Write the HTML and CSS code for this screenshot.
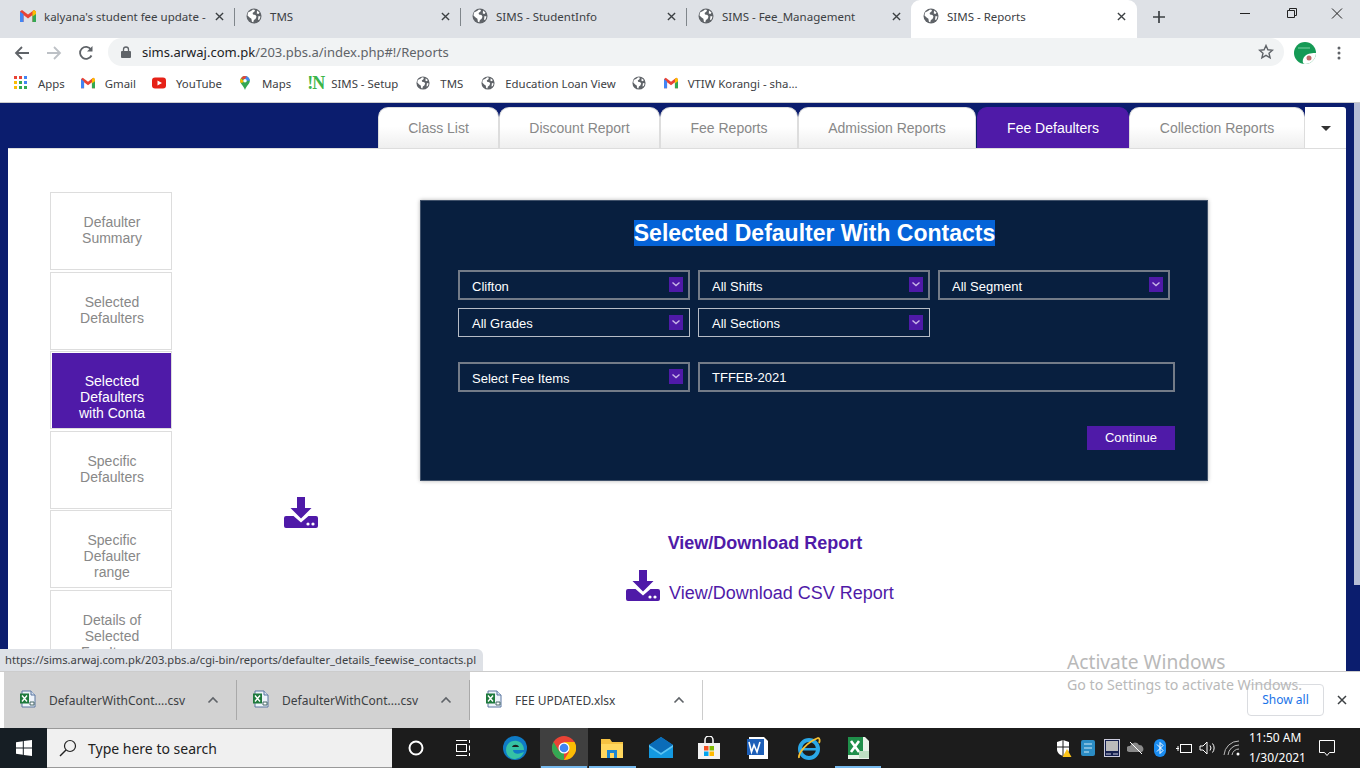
FILE: index.html
```html
<!DOCTYPE html>
<html lang="en">
<head>
<meta charset="utf-8">
<title>SIMS - Reports</title>
<link rel="stylesheet" href="styles.css">
</head>
<body>
<svg class="defs" width="0" height="0" aria-hidden="true">
  <symbol id="globe" viewBox="0 0 16 16"><circle cx="8" cy="8" r="7.5" fill="#5f6368"/><path d="M2 4.500 5 3l2-1.600 2 .6-.5 1.600L6.600 5 7 6.500l2.500.6 1 1.600-1 2.200-1.600 1.200-.6 2.200-1.400-.5-.5-3L3.600 9.600 1.500 7.500z" fill="#fff"/><path d="M11 2.500l2.500 2-1 1.500-1.700-.5zM12.500 8l2 .5-1 3-1.500.5z" fill="#fff"/></symbol>
  <symbol id="gmail" viewBox="0 0 16 12"><path d="M0 1.500V12h3.500V5L8 8.500 12.500 5v7H16V1.500L14 0 8 4.500 2 0z" fill="#ea4335"/><path d="M0 1.500V12h3.500V4.200z" fill="#4285f4"/><path d="M16 1.500V12h-3.500V4.200z" fill="#34a853"/><path d="M14 0l2 1.500v2.500l-3.500 2.500V1.100z" fill="#fbbc04"/></symbol>
  <symbol id="xlfile" viewBox="0 0 17 18"><path d="M3 1h9l4 4v12H3z" fill="#eef3fa" stroke="#5b76a0"/><path d="M12 1v4h4" fill="#d5e0ef" stroke="#5b76a0"/><rect x="1" y="3.500" width="9" height="10" fill="#1f7a3d"/><path d="M3 5.500l5 6M8 5.500l-5 6" stroke="#fff" stroke-width="1.400"/><path d="M11 12h4v3h-4z" fill="#fff" stroke="#466"/></symbol>
  <symbol id="dl" viewBox="0 0 34 31"><path d="M13 0h8v11h6.500L17 21.500 6.500 11H13z" fill="#4f1aa8"/><path d="M2 19h7.500l7.500 6.500 7.500-6.500H32a2 2 0 0 1 2 2v8a2 2 0 0 1-2 2H2a2 2 0 0 1-2-2v-8a2 2 0 0 1 2-2z" fill="#4f1aa8"/><circle cx="24" cy="27" r="1.600" fill="#fff"/><circle cx="29" cy="27" r="1.600" fill="#fff"/></symbol>
  <symbol id="chev" viewBox="0 0 14 15"><rect width="14" height="15" fill="#4f1aa8"/><path d="M3.500 5.500 7 8.500l3.500-3" fill="none" stroke="#c9b6e8" stroke-width="1.400"/></symbol>
  <symbol id="x" viewBox="0 0 10 10"><path d="M1 1l8 8M9 1l-8 8" stroke="#3c4043" stroke-width="1.500" fill="none"/></symbol>
  <symbol id="up" viewBox="0 0 12 8"><path d="M1.500 6.500 6 2l4.500 4.500" stroke="#5f6368" stroke-width="1.600" fill="none"/></symbol>
</svg>

<div class="tabstrip">
  <div class="ctab sep"><svg class="fav16 g"><use href="#gmail"/></svg><span class="ctab-t">kalyana's student fee update -</span><svg class="tx"><use href="#x"/></svg></div>
  <div class="ctab sep"><svg class="fav16"><use href="#globe"/></svg><span class="ctab-t">TMS</span><svg class="tx"><use href="#x"/></svg></div>
  <div class="ctab sep"><svg class="fav16"><use href="#globe"/></svg><span class="ctab-t">SIMS - StudentInfo</span><svg class="tx"><use href="#x"/></svg></div>
  <div class="ctab narrow"><svg class="fav16"><use href="#globe"/></svg><span class="ctab-t">SIMS - Fee_Management</span><svg class="tx"><use href="#x"/></svg></div>
  <div class="ctab active"><svg class="fav16"><use href="#globe"/></svg><span class="ctab-t">SIMS - Reports</span><svg class="tx"><use href="#x"/></svg></div>
  <svg class="newtab" viewBox="0 0 12 12"><path d="M6 0v12M0 6h12" stroke="#3c4043" stroke-width="1.700"/></svg>
  <div class="winbtns">
    <svg class="wb" viewBox="0 0 46 20"><path d="M18 10.500h10" stroke="#222"/></svg>
    <svg class="wb" viewBox="0 0 46 20"><path d="M19.500 7.500h7v7h-7zM21.500 7.500v-2h7v7h-2" fill="none" stroke="#222"/></svg>
    <svg class="wb" viewBox="0 0 46 20"><path d="M18 5.500l10 10M28 5.500l-10 10" stroke="#222"/></svg>
  </div>
</div>

<div class="toolbar">
  <svg class="nav" viewBox="0 0 16 16"><path d="M15 8H2M8 2 2 8l6 6" fill="none" stroke="#5f6368" stroke-width="1.800"/></svg>
  <svg class="nav" viewBox="0 0 16 16"><path d="M1 8h13M8 2l6 6-6 6" fill="none" stroke="#bdc1c6" stroke-width="1.800"/></svg>
  <svg class="nav" viewBox="0 0 16 16"><path d="M13.500 10.500A6 6 0 1 1 13 4.500" fill="none" stroke="#5f6368" stroke-width="1.800"/><path d="M14.500 1v5.500H9z" fill="#5f6368"/></svg>
  <div class="omni">
    <svg class="lock" viewBox="0 0 10 12"><path d="M2.500 5V3.500a2.500 2.500 0 0 1 5 0V5" fill="none" stroke="#5f6368" stroke-width="1.300"/><rect y="5" width="10" height="7" rx="1" fill="#5f6368"/></svg>
    <span class="url"><b>sims.arwaj.com.pk</b>/203.pbs.a/index.php#!/Reports</span>
    <svg class="star" viewBox="0 0 16 16"><path d="M8 1.500l1.900 4.300 4.600.4-3.500 3 1.100 4.600L8 11.400l-4.100 2.400L5 9.200l-3.500-3 4.600-.4z" fill="none" stroke="#5f6368" stroke-width="1.400"/></svg>
  </div>
  <svg class="avatar" viewBox="0 0 22 22"><circle cx="11" cy="11" r="11" fill="#159a55"/><path d="M22 11a11 11 0 0 1-11 11c-3 0-3-5 0-8s8-3 11-3z" fill="#fff"/><circle cx="15" cy="16" r="2.500" fill="#c06a6a"/><path d="M4 6h12" stroke="#7fd0a6"/></svg>
  <svg class="kebab" viewBox="0 0 4 14"><circle cx="2" cy="2" r="1.500" fill="#5f6368"/><circle cx="2" cy="7" r="1.500" fill="#5f6368"/><circle cx="2" cy="12" r="1.500" fill="#5f6368"/></svg>
</div>

<div class="bookmarks">
  <div class="bm"><svg class="fav14" viewBox="0 0 14 14"><g><rect x="0" y="0" width="3" height="3" fill="#ea4335"/><rect x="5" y="0" width="3" height="3" fill="#ea4335"/><rect x="10" y="0" width="3" height="3" fill="#4285f4"/><rect x="0" y="5" width="3" height="3" fill="#fbbc04"/><rect x="5" y="5" width="3" height="3" fill="#34a853"/><rect x="10" y="5" width="3" height="3" fill="#4285f4"/><rect x="0" y="10" width="3" height="3" fill="#fbbc04"/><rect x="5" y="10" width="3" height="3" fill="#34a853"/><rect x="10" y="10" width="3" height="3" fill="#34a853"/></g></svg>Apps</div>
  <div class="bm"><svg class="fav14"><use href="#gmail"/></svg>Gmail</div>
  <div class="bm"><svg class="fav14" viewBox="0 0 14 14"><rect y="1.500" width="14" height="11" rx="3" fill="#e62117"/><path d="M5.500 4.500v5L10 7z" fill="#fff"/></svg>YouTube</div>
  <div class="bm"><svg class="fav14" viewBox="0 0 12 16"><path d="M6 0a5.500 5.500 0 0 1 5.500 5.500C11.500 9.500 7.500 11 6 16 4.500 11 .5 9.500.5 5.500A5.500 5.500 0 0 1 6 0z" fill="#34a853"/><path d="M6 0a5.500 5.500 0 0 1 5.500 5.500L8 5.500A2 2 0 0 0 6 3.500z" fill="#4285f4"/><path d="M1.500 2.500 4 5.500A2 2 0 0 0 4.500 7L1 8C.2 6 .3 4 1.500 2.500z" fill="#fbbc04"/><path d="M1.500 2.500A5.500 5.500 0 0 1 6 0l2 1L4.500 4z" fill="#ea4335"/><circle cx="6" cy="5.500" r="2" fill="#fff"/></svg>Maps</div>
  <div class="bm bm-w"><span class="innov"><i>!</i>N</span>SIMS - Setup</div>
  <div class="bm bm-w"><svg class="fav14"><use href="#globe"/></svg>TMS</div>
  <div class="bm"><svg class="fav14"><use href="#globe"/></svg>Education Loan View</div>
  <div class="bm bm-empty"><svg class="fav14"><use href="#globe"/></svg></div>
  <div class="bm"><svg class="fav14"><use href="#gmail"/></svg>VTIW Korangi - sha...</div>
</div>

<div class="page">
  <div class="page-inner">
    <nav class="report-tabs">
      <div class="rtab w-class">Class List</div>
      <div class="rtab w-disc">Discount Report</div>
      <div class="rtab w-fee">Fee Reports</div>
      <div class="rtab w-adm">Admission Reports</div>
      <div class="rtab w-def on">Fee Defaulters</div>
      <div class="rtab w-col">Collection Reports</div>
      <div class="rtab-more"><span class="caret"></span></div>
    </nav>
    <div class="sheet">
      <aside class="side">
        <div class="side-item">Defaulter Summary</div>
        <div class="side-item">Selected Defaulters</div>
        <div class="side-item on"><div class="side-fill">Selected Defaulters with Conta</div></div>
        <div class="side-item">Specific Defaulters</div>
        <div class="side-item">Specific Defaulter range</div>
        <div class="side-item">Details of Selected Fee Items</div>
      </aside>
      <main class="main">
        <section class="panel">
          <h1 class="panel-title"><span class="sel">Selected Defaulter With Contacts</span></h1>
          <div class="fields">
            <div class="field">Clifton<svg class="chev"><use href="#chev"/></svg></div>
            <div class="field">All Shifts<svg class="chev"><use href="#chev"/></svg></div>
            <div class="field">All Segment<svg class="chev"><use href="#chev"/></svg></div>
            <div class="field light">All Grades<svg class="chev"><use href="#chev"/></svg></div>
            <div class="field light">All Sections<svg class="chev"><use href="#chev"/></svg></div>
          </div>
          <div class="fields second">
            <div class="field">Select Fee Items<svg class="chev"><use href="#chev"/></svg></div>
            <div class="field wide">TFFEB-2021</div>
          </div>
          <div class="actions"><div class="continue">Continue</div></div>
        </section>
        <div class="lower">
          <svg class="dl lone"><use href="#dl"/></svg>
          <div class="links">
            <div class="link-bold">View/Download Report</div>
            <div class="link-csv"><svg class="dl"><use href="#dl"/></svg><span>View/Download CSV Report</span></div>
          </div>
        </div>
      </main>
    </div>
  </div>
  <div class="scroll-thumb"></div>
  <div class="status">https://sims.arwaj.com.pk/203.pbs.a/cgi-bin/reports/defaulter_details_feewise_contacts.pl</div>
</div>

<div class="shelf">
  <div class="dlitem grey"><svg class="xl"><use href="#xlfile"/></svg><span class="dlname">DefaulterWithCont....csv</span><svg class="dlup"><use href="#up"/></svg></div>
  <div class="dlitem grey"><svg class="xl"><use href="#xlfile"/></svg><span class="dlname">DefaulterWithCont....csv</span><svg class="dlup"><use href="#up"/></svg></div>
  <div class="dlitem last"><svg class="xl"><use href="#xlfile"/></svg><span class="dlname">FEE UPDATED.xlsx</span><svg class="dlup"><use href="#up"/></svg></div>
  <div class="showall">Show all</div>
  <svg class="shelfx"><use href="#x"/></svg>
  <div class="activate"><div class="a1">Activate Windows</div><div class="a2">Go to Settings to activate Windows.</div></div>
</div>

<footer class="taskbar">
  <div class="start"><svg class="winlogo" viewBox="0 0 16 16"><path d="M0 2.200 6.800 1.200V7.500H0zM7.800 1 16 0v7.500H7.800zM0 8.500h6.800v6.300L0 13.800zM7.800 8.500H16V16l-8.200-1.100z" fill="#fff"/></svg></div>
  <div class="search"><svg class="mag" viewBox="0 0 18 18"><circle cx="11" cy="7" r="5.500" fill="none" stroke="#222" stroke-width="1.200"/><path d="M7 11 1 17" stroke="#222" stroke-width="1.400"/></svg>Type here to search</div>
  <div class="tb"><svg class="ti" viewBox="0 0 20 20"><circle cx="10" cy="10" r="6.500" fill="none" stroke="#fff" stroke-width="2"/></svg></div>
  <div class="tb"><svg class="ti" viewBox="0 0 20 20"><path d="M3 2.500h11M3 17.500h11" stroke="#fff"/><rect x="3.500" y="6.500" width="10" height="7" fill="none" stroke="#fff"/><path d="M16.500 2v3M16.500 7.500v5M16.500 15v3" stroke="#fff"/></svg></div>
  <div class="tb app first"><svg class="ti big" viewBox="0 0 24 24"><circle cx="12" cy="12" r="12" fill="#0f7bc6"/><path d="M3 14C3 7 9 4 14 5s7 5 7 9h-11c0 3 4 5 8 3l3-1c-2 5-6 7-10 7S3 19 3 14z" fill="#35c1a5"/><path d="M9 11c1-3 6-3 7 0z" fill="#1c1c1c"/></svg></div>
  <div class="tb app running hot"><svg class="ti big" viewBox="0 0 24 24"><circle cx="12" cy="12" r="12" fill="#ea4335"/><path d="M12 24A12 12 0 0 1 1.600 6L7 15l5 2z" fill="#34a853"/><path d="M12 6h10.500A12 12 0 0 1 12 24l5-8z" fill="#fbbc04"/><circle cx="12" cy="12" r="5.500" fill="#fff"/><circle cx="12" cy="12" r="4.300" fill="#4285f4"/></svg></div>
  <div class="tb app running"><svg class="ti big" viewBox="0 0 24 24"><path d="M1 3h9l2 3h11v16H1z" fill="#f5c242"/><rect x="1" y="8" width="22" height="14" fill="#ffd75e"/><rect x="7" y="14" width="10" height="8" fill="#1c86d1"/><rect x="10" y="17" width="4" height="5" fill="#ffd75e"/></svg></div>
  <div class="tb app"><svg class="ti big" viewBox="0 0 24 24"><path d="M0 9 12 1l12 8v13H0z" fill="#1499e0"/><path d="M0 9l12 8 12-8-12-8z" fill="#0b6cb8"/><path d="M0 9l12 8 12-8v2L12 19 0 11z" fill="#5cc4f4"/></svg></div>
  <div class="tb app"><svg class="ti big" viewBox="0 0 24 24"><path d="M8 6V3a4 4 0 0 1 8 0v3" fill="none" stroke="#fff" stroke-width="1.500" transform="translate(0 1)"/><rect x="1" y="7" width="22" height="16" fill="#f2f2f2"/><rect x="7" y="10" width="4.500" height="4.500" fill="#f25022"/><rect x="12.500" y="10" width="4.500" height="4.500" fill="#7fba00"/><rect x="7" y="15.500" width="4.500" height="4.500" fill="#00a4ef"/><rect x="12.500" y="15.500" width="4.500" height="4.500" fill="#ffb900"/></svg></div>
  <div class="tb app"><svg class="ti big" viewBox="0 0 24 24"><path d="M3 1h15l4 4v18H3z" fill="#fff"/><rect x="1" y="3" width="17" height="16" fill="#1d5fb8"/><path d="M3 6l2.500 10L8 9l3 7 3-10" fill="none" stroke="#fff" stroke-width="1.600"/></svg></div>
  <div class="tb app pushed"><svg class="ti big" viewBox="0 0 24 24"><circle cx="12" cy="13" r="9" fill="none" stroke="#2aa7e6" stroke-width="4"/><rect x="5" y="12" width="15" height="2.500" fill="#2aa7e6"/><path d="M2 22C1 17 10 6 21 2c2 0 2 3 1 5" fill="none" stroke="#f5c033" stroke-width="1.800"/></svg></div>
  <div class="tb app running"><svg class="ti big" viewBox="0 0 24 24"><path d="M2 1h17l4 4v18H2z" fill="#eaf3ea"/><rect x="2" y="1" width="15" height="18" fill="#1f8f4a"/><path d="M5 5l8 11M13 5 5 16" stroke="#fff" stroke-width="2.600"/><path d="M13 15h10v7H13z" fill="#bfe0c4"/></svg></div>
  <div class="tray">
    <svg class="tri" viewBox="0 0 16 18"><path d="M1 3l6-2 6 2v7c0 4-3 6-6 7-3-1-6-3-6-7z" fill="#fff"/><path d="M7 1v16M1 8h12" stroke="#1c1c1c"/><path d="M11 10l4.500 8h-9z" fill="#fcc419"/></svg>
    <svg class="tri" viewBox="0 0 16 18"><rect x="1" y="1" width="14" height="16" rx="2" fill="#2b8cc4"/><path d="M4 5h8M4 9h8M4 13h5" stroke="#cfeaf8"/></svg>
    <svg class="tri" viewBox="0 0 16 18"><rect x=".5" y=".5" width="15" height="17" fill="#15204e" stroke="#ccd"/><rect x="2" y="2" width="12" height="10" fill="#bbb"/><path d="M2 15h5M9 15h5" stroke="#ccd"/></svg>
    <svg class="tri" viewBox="0 0 18 18"><path d="M2 13a3 3 0 0 1 1-6 5 5 0 0 1 9-1 4 4 0 0 1 3 7z" fill="#8a8a8a"/><path d="M3 3l12 12" stroke="#fff"/></svg>
    <svg class="tri" viewBox="0 0 12 18"><rect width="12" height="18" rx="6" fill="#1a8cf0"/><path d="M3 5.500l6 6L6 14.500V3.500l3 3-6 6" fill="none" stroke="#fff"/></svg>
    <svg class="tri" viewBox="0 0 18 18"><rect x="5.500" y="5.500" width="11" height="8" fill="none" stroke="#fff"/><path d="M1 9.500h3M3 7v5" stroke="#fff"/></svg>
    <svg class="tri" viewBox="0 0 18 18"><path d="M1 7h3l4-4v12l-4-4H1z" fill="none" stroke="#fff"/><path d="M11 6.500a4 4 0 0 1 0 5M13.500 4.500a7 7 0 0 1 0 9" fill="none" stroke="#fff"/></svg>
    <svg class="tri" viewBox="0 0 18 18"><path d="M1 16A15 15 0 0 1 16 2M5 16A11 11 0 0 1 16 6M9 16a7 7 0 0 1 7-6" fill="none" stroke="#bbb"/><circle cx="15" cy="15" r="1.500" fill="#fff"/></svg>
    <div class="clock"><div>11:50 AM</div><div>1/30/2021</div></div>
    <svg class="notif" viewBox="0 0 18 18"><path d="M1.500 1.500h15v12h-5L9 16.500 6.500 13.500h-5z" fill="none" stroke="#fff"/></svg>
  </div>
</footer>
</body>
</html>
```
FILE: styles.css
```css
* { box-sizing: border-box; }
html, body { margin: 0; height: 100%; overflow: hidden; }
body { width: 1360px; height: 768px; display: flex; flex-direction: column; font-family: "Noto Sans", "Open Sans", sans-serif; background: #fff; }
.defs { position: absolute; }

/* Chrome tab strip */
.tabstrip { height: 38px; flex: none; background: #dee1e6; display: flex; align-items: stretch; padding-left: 8px; color: #3c4043; font-size: 11.500px; }
.ctab { width: 227px; margin-right: -1px; display: flex; align-items: center; padding: 0 11px 6px 12px; position: relative; }
.ctab.narrow { width: 226px; }
.ctab.sep::after { content: ""; position: absolute; right: 0; top: 8px; height: 18px; width: 1px; background: #80868b; }
.ctab.active { background: #fff; border-radius: 9px 9px 0 0; width: 226px; }
.ctab-t { flex: 1; padding-left: 8px; white-space: nowrap; overflow: hidden; }
.fav16 { width: 16px; height: 16px; flex: none; }
.fav16.g { height: 12px; }
.tx { width: 9px; height: 9px; flex: none; }
.newtab { width: 12px; height: 12px; margin: 11px 0 0 17px; }
.winbtns { margin-left: auto; display: flex; }
.wb { width: 46px; height: 26px; }

/* Toolbar */
.toolbar { height: 30px; flex: none; background: #fff; display: flex; align-items: center; padding-left: 14px; }
.nav { width: 16px; height: 16px; margin-right: 16px; flex: none; }
.omni { width: 1176px; height: 28px; margin: 0 0 2px -2px; border-radius: 14px; background: #f1f3f4; display: flex; align-items: center; padding: 0 10px 0 13px; font-size: 13px; color: #5f6368; }
.lock { width: 10px; height: 12px; margin-right: 11px; }
.url { flex: 1; white-space: nowrap; }
.url b { font-weight: 400; color: #202124; }
.star { width: 16px; height: 16px; }
.avatar { width: 22px; height: 22px; margin-left: 10px; flex: none; }
.kebab { width: 4px; height: 14px; margin-left: 21px; flex: none; }

/* Bookmarks */
.bookmarks { height: 35px; flex: none; background: #fff; border-bottom: 1px solid #ccc; display: flex; align-items: center; padding: 0 0 4px 14px; font-size: 11.400px; color: #3c4043; }
.bm { display: flex; align-items: center; margin-right: 16px; white-space: nowrap; }
.bm-w { margin-right: 18px; }
.bm-empty { margin-right: 18px; }
.bm-empty .fav14 { margin-right: 0; }
.fav14 { width: 14px; height: 14px; margin-right: 10px; flex: none; }
.innov { width: 17px; margin-right: 7px; font: 700 18px/16px "Liberation Serif", serif; color: #3cb54a; letter-spacing: -1px; }
.innov i { font-style: normal; }

/* Page */
.page { flex: 1; position: relative; background: #0b1d6e; overflow: hidden; min-height: 0; }
.page-inner { width: 1346px; margin-left: 8px; display: flex; flex-direction: column; height: 100%; }
.report-tabs { height: 46px; flex: none; padding: 4px 0 0 370px; display: flex; font: 14px "Liberation Sans", Arial, sans-serif; color: #888; }
.rtab { text-align: center; line-height: 41px; height: 42px; background: linear-gradient(#fff 45%, #eeeeee); border: 1px solid #ddd; border-bottom: 0; border-radius: 10px 10px 0 0; }
.w-class { width: 121px; }
.w-disc { width: 161px; }
.w-fee { width: 138px; }
.w-adm { width: 178px; margin-right: 1px; }
.w-def { width: 152px; }
.w-col { width: 176px; }
.rtab.on { background: #4f1aa8; border-color: #4f1aa8; color: #fff; }
.rtab-more { width: 41px; height: 42px; background: #fff; border-top-right-radius: 3px; display: flex; align-items: center; justify-content: center; }
.caret { width: 0; height: 0; border-left: 5px solid transparent; border-right: 5px solid transparent; border-top: 5px solid #333; }
.sheet { flex: 1; min-height: 0; overflow: hidden; width: 1338px; background: #fff; border-top: 1px solid #ddd; display: flex; padding: 43px 0 0 42px; font-family: "Liberation Sans", Arial, sans-serif; margin-top: -1px; }

.side { width: 122px; flex: none; display: flex; flex-direction: column; gap: 1.500px; font-size: 14px; line-height: 16px; color: #888; text-align: center; }
.side-item { height: 78px; flex: none; border: 1px solid #ddd; padding: 21px 20px 0 22px; }
.side-item.on { padding: 1px 0 0 1px; }
.side-fill { height: 75px; background: #4f1aa8; color: #fff; padding: 20px 20px 0 21px; }

.main { margin-left: 248px; width: 788px; flex: none; }
.panel { height: 281px; margin-top: 8px; background: #081f3f; border: 1px solid #41526b; box-shadow: 0 0 4px rgba(0,0,0,.3); padding: 0 32px 0 37px; color: #fff; font-size: 13px; }
.panel-title { margin: 19px 0 23px; text-align: center; font-size: 23px; line-height: 27px; font-weight: 700; position: relative; left: -2px; }
.sel { background: #0563d8; }
.fields { display: grid; grid-template-columns: repeat(3, 232px); gap: 8px 8px; width: 712px; }
.fields.second { margin-top: 25px; grid-template-columns: 232px 477px; gap: 8px; }
.field { height: 30px; border: 2px solid #737b88; padding: 4px 5px 0 12px; line-height: 16px; display: flex; align-items: center; justify-content: space-between; }
.field.light { height: 29px; border: 1px solid #b6bcc6; padding: 2px 6px 0 13px; }
.field.wide { padding-top: 2px; }
.chev { width: 14px; height: 15px; align-self: flex-start; margin-top: 1px; flex: none; }
.field.light .chev { margin-top: 4px; }
.actions { display: flex; justify-content: flex-end; margin-top: 34px; }
.continue { width: 88px; height: 24px; background: #4f1aa8; text-align: center; line-height: 23px; }

.lower { position: relative; height: 200px; }
.dl { width: 34px; height: 31px; }
.lone { position: absolute; left: -136px; top: 16px; }
.links { width: 690px; color: #4f1aa8; font-size: 18px; }
.link-bold { font-weight: 700; text-align: center; padding-top: 52px; line-height: 21px; }
.link-csv { display: flex; align-items: flex-end; margin: 16px 0 0 206px; }
.link-csv span { margin: 0 0 -3px 9px; line-height: 21px; }

.scroll-thumb { position: absolute; right: 0; top: 0; width: 6px; height: 482px; background: #b6bdd6; }
.status { position: absolute; left: 0; bottom: 0; width: 483px; height: 22px; padding-left: 5px; background: #dee1e6; border-top-right-radius: 6px; font-size: 11.200px; line-height: 22px; color: #3c4043; white-space: nowrap; }

/* Download shelf */
.shelf { height: 57px; flex: none; background: #fff; border-top: 1px solid #ccc; display: flex; padding-left: 4px; position: relative; font-size: 12px; color: #3c4043; }
.dlitem { width: 233px; display: flex; align-items: center; padding: 0 18px 0 15px; position: relative; }
.dlitem.grey { background: #d2d2d2; }
.dlitem::after { content: ""; position: absolute; right: 0; top: 8px; bottom: 8px; width: 1px; background: #a9a9a9; }
.dlitem.last::after { background: #ccc; }
.xl { width: 17px; height: 18px; flex: none; margin-bottom: 2px; }
.dlname { flex: 1; padding-left: 13px; white-space: nowrap; }
.dlup { width: 12px; height: 8px; flex: none; }
.showall { position: absolute; left: 1247px; top: 12px; width: 77px; height: 32px; border: 1px solid #dadce0; border-radius: 4px; color: #1a73e8; text-align: center; line-height: 29px; }
.shelfx { position: absolute; left: 1337px; top: 23px; width: 10px; height: 10px; }
.activate { position: absolute; left: 1067px; top: -23px; color: #b9b9b9; white-space: nowrap; pointer-events: none; }
.a1 { font-size: 19.200px; line-height: 26px; }
.a2 { font-size: 14.200px; line-height: 20px; }

/* Taskbar */
.taskbar { height: 40px; flex: none; background: #1c1c1c; display: flex; align-items: center; color: #fff; }
.start { width: 47px; height: 40px; display: flex; align-items: center; justify-content: center; background: #161e24; }
.winlogo { width: 16px; height: 16px; }
.search { width: 345px; height: 40px; background: #f0f0f0; color: #222; border-top: 1px solid #999; border-bottom: 1px solid #999; font-size: 14px; display: flex; align-items: center; padding-left: 12px; }
.mag { width: 18px; height: 18px; margin-right: 11px; }
.tb { width: 47.500px; height: 40px; display: flex; align-items: center; justify-content: center; position: relative; }
.tb.app { width: 48.500px; }
.tb.first { margin-left: 4px; }
.tb.pushed { margin-left: 3px; }
.tb.hot { background: #404040; }
.tb.running::after { content: ""; position: absolute; left: 1px; right: 1px; bottom: 0; height: 2px; background: #76b9ed; }
.ti { width: 20px; height: 20px; }
.ti.big { width: 24px; height: 24px; }
.tray { margin-left: auto; display: flex; align-items: center; padding-right: 24px; }
.tri { width: 18px; height: 18px; margin-right: 6px; }
.clock { width: 52px; margin-left: 2px; font-size: 12px; line-height: 20px; text-align: center; white-space: nowrap; }
.notif { width: 18px; height: 18px; margin: 0 0 0 17px; }
```
